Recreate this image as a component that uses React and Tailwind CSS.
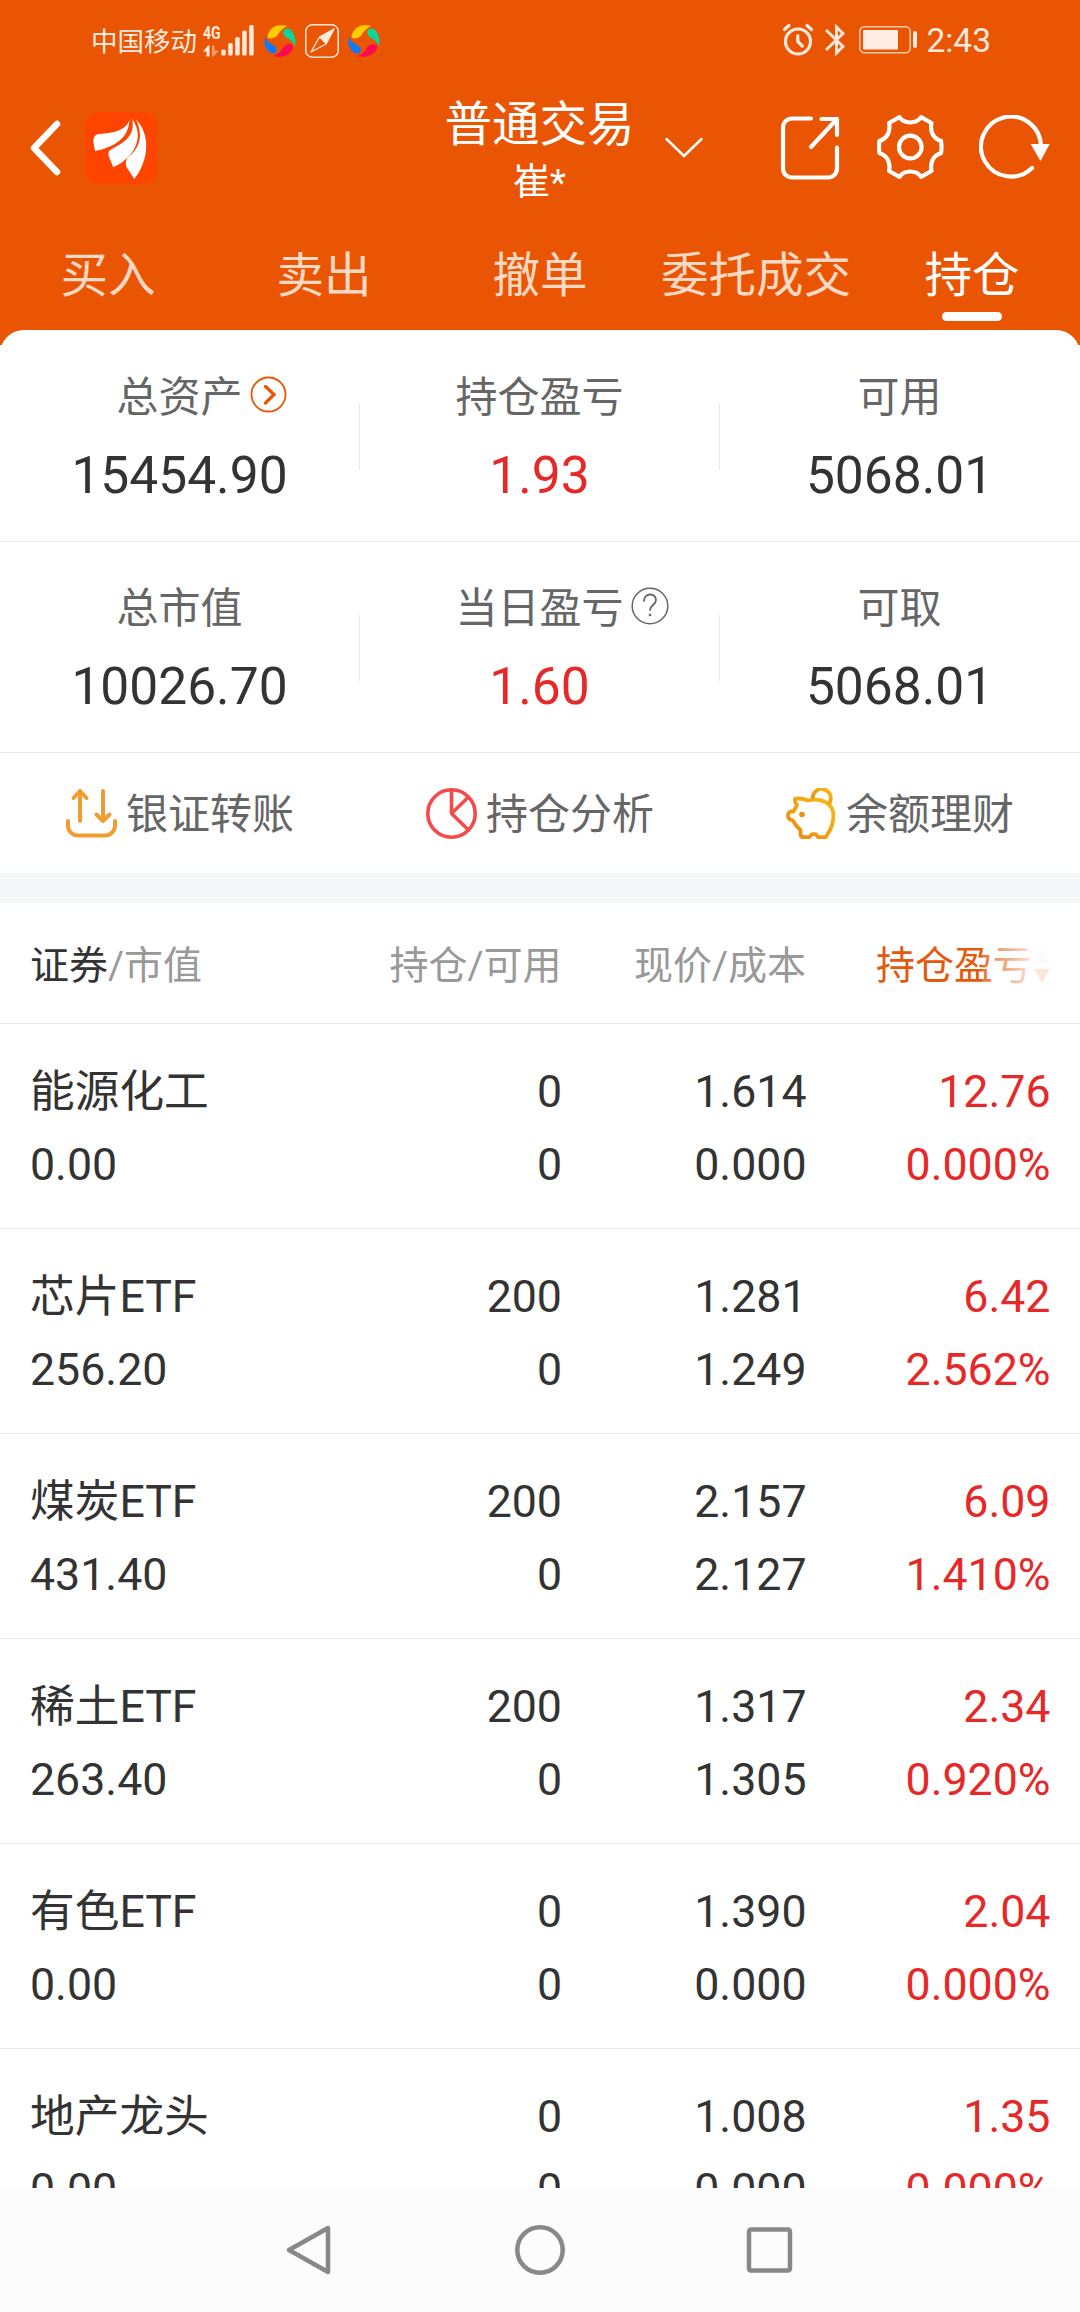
// Holdings page of the brokerage app (普通交易 / 持仓)

const TABS = ['买入', '卖出', '撤单', '委托成交', '持仓'];

const SUMMARY = [
    [
        { label: '总资产', value: '15454.90', icon: 'more' },
        { label: '持仓盈亏', value: '1.93', up: true },
        { label: '可用', value: '5068.01' },
    ],
    [
        { label: '总市值', value: '10026.70' },
        { label: '当日盈亏', value: '1.60', up: true, icon: 'help' },
        { label: '可取', value: '5068.01' },
    ],
];

const HOLDINGS = [
    { name: '能源化工', amount: '0.00', held: '0', usable: '0', price: '1.614', cost: '0.000', profit: '12.76', rate: '0.000%' },
    { name: '芯片ETF', amount: '256.20', held: '200', usable: '0', price: '1.281', cost: '1.249', profit: '6.42', rate: '2.562%' },
    { name: '煤炭ETF', amount: '431.40', held: '200', usable: '0', price: '2.157', cost: '2.127', profit: '6.09', rate: '1.410%' },
    { name: '稀土ETF', amount: '263.40', held: '200', usable: '0', price: '1.317', cost: '1.305', profit: '2.34', rate: '0.920%' },
    { name: '有色ETF', amount: '0.00', held: '0', usable: '0', price: '1.390', cost: '0.000', profit: '2.04', rate: '0.000%' },
    { name: '地产龙头', amount: '0.00', held: '0', usable: '0', price: '1.008', cost: '0.000', profit: '1.35', rate: '0.000%' },
];

/* ---------- Icons ---------- */

function SwirlIcon() {
    return (
        <svg className="h-8 w-8" viewBox="0 0 32 32">
            <path d="M3.5 12.5C4 6 9 .5 16 .3c3-.1 6 .2 7 .9-4 1.800-7 4.800-9.500 8.800-2.500 3.500-7.500 4.500-10 2.500z" fill="#ffcc00" />
            <path d="M19.5 5.500C21 3 25 2.500 28 6c3.500 5 4 10 3 16-1.500-5-4.500-7-8.500-9.500-3-2-4-4.500-3-7z" fill="#0ad69a" />
            <path d="M29 22.500c0 3.500-5 8.500-12 9.300-3 .2-5.500-.1-7.500-.8 4.500-1.500 7-4 9.500-8 2-3.500 6-5 8.500-3.500 1.500.8 1.800 1.500 1.500 3z" fill="#ff0a50" />
            <path d="M1.200 11.500C2.500 16 5 18 9 20c3.500 2 4.500 5 3 7.500-2 2.500-6.500.5-9-3C0 20 0 16 1.200 11.500z" fill="#0a7bff" />
        </svg>
    );
}

function CompassIcon() {
    return (
        <svg className="h-[34px] w-[34px]" viewBox="0 0 34 34" fill="none" stroke="#ffe9dc">
            <rect x="0.8" y="0.8" width="32.4" height="32.4" rx="6.5" strokeWidth="1.5" />
            <path d="M29 5 14.500 13 6 28l15-8z" strokeWidth="1.300" strokeLinejoin="round" />
            <path d="M29 5 14.500 13 21 20z" fill="#ffe9dc" />
        </svg>
    );
}

function SignalIcon() {
    return (
        <svg className="h-3 w-4" viewBox="0 0 16 12">
            <path d="M0 6.500 5 0.500h1.500V11.500h-3V6.500z" fill="#ffe9dc" />
            <path d="M9 0.500h2.500v5H16L10.500 11.500H9z" fill="#f7996a" />
        </svg>
    );
}

function BarsIcon() {
    return (
        <svg className="h-[31px] w-[33px]" viewBox="0 0 33 31" fill="#ffe9dc">
            <rect x="0.200" y="24.500" width="4.500" height="6" rx="1.500" />
            <rect x="7.200" y="18" width="4.500" height="12.500" rx="1.500" />
            <rect x="14.200" y="12" width="4.500" height="18.500" rx="1.500" />
            <rect x="21.200" y="5.500" width="4.500" height="25" rx="1.500" />
            <rect x="28.200" y="0" width="4.500" height="30.500" rx="1.500" />
        </svg>
    );
}

function AlarmIcon() {
    return (
        <svg className="h-[34px] w-[34px]" viewBox="0 0 34 34" fill="none" stroke="#ffe9dc" strokeWidth="3.2" strokeLinecap="round">
            <circle cx="17" cy="18.500" r="12.500" />
            <path d="M16.800 12.500v6l4.500 4.500M3.500 6.500l4.500-4M26 2.500l4.500 4" />
        </svg>
    );
}

function BluetoothIcon() {
    return (
        <svg className="h-8 w-5" viewBox="0 0 20 32" fill="none" stroke="#ffe9dc" strokeWidth="2.900">
            <path d="M1 6l17 16.500-6.500 6.500V3l6.500 6.500L1 26" />
        </svg>
    );
}

function BatteryIcon() {
    return (
        <svg className="h-7 w-[59px]" viewBox="0 0 59 28">
            <rect x="0.800" y="0.800" width="50.400" height="26" rx="4.500" fill="none" stroke="#ffc9ab" strokeWidth="1.500" />
            <rect x="4" y="4" width="35" height="19.500" rx="1" fill="#ffede3" />
            <rect x="54" y="5" width="4" height="17" rx="2" fill="#ffe9dc" />
        </svg>
    );
}

function BrandLogo() {
    return (
        <svg className="h-[72px] w-[72px]" viewBox="0 0 72 72">
            <rect width="72" height="72" rx="14" fill="#ff4400" />
            <g fill="#fff">
                <path d="M44.300 8C42 17 30 21.500 14 22c-4 .5-5.500 3-5.700 7.700L10 39c18-3.500 34-12 34.300-31z" />
                <path d="M47.300 7C50 24 40 30 26 37.500c-3 2-3 4-2 7.500l4.300 10.300C47 47 61 27 47.300 7z" />
                <path d="M51 7.300C60 27 52 38 43.500 45c-3 3-3 5.500-2 10l7.800 12C60 54 69 27 51 7.300z" />
            </g>
        </svg>
    );
}

function ShareIcon() {
    return (
        <svg className="h-[66px] w-[62px]" viewBox="0 0 62 66" fill="none" stroke="#fff" strokeWidth="4.200" strokeLinecap="round" strokeLinejoin="round">
            <path d="M31 3.500H12a9 9 0 0 0-9 9v41a9 9 0 0 0 9 9h36a9 9 0 0 0 9-9V32.500" />
            <path d="M41.500 4H57v16M57 4 31 32" />
        </svg>
    );
}

function GearIcon() {
    return (
        <svg className="h-[66px] w-[68px]" viewBox="0 0 68 66" fill="none" stroke="#fff" strokeWidth="4.200" strokeLinejoin="round">
            <path d="M22.500 2.200C25 6 29 7.500 33.300 7.500S41.500 6 44 2.200L54.500 8C52.500 17 57 24 64 25.800Q65 32 64 38.200C57 40 52.500 47 54.500 56L44 61.800C41.500 58 37.600 56.500 33.300 56.500S25 58 22.500 61.800L12 56C14 47 9.500 40 2.500 38.200Q1.500 32 2.500 25.800C9.500 24 14 17 12 8Z" />
            <circle cx="33.300" cy="32" r="11.300" />
        </svg>
    );
}

function RefreshIcon() {
    return (
        <svg className="h-[66px] w-[74px]" viewBox="0 0 74 66">
            <path d="M53 53A30 30 0 1 1 62 32" fill="none" stroke="#fff" strokeWidth="4.200" strokeLinecap="round" />
            <path d="M51.700 29h19L61.500 46z" fill="#fff" />
        </svg>
    );
}

function TransferIcon() {
    return (
        <svg className="h-[51px] w-[51px]" viewBox="0 0 51 51" fill="none" stroke="#f09c30" strokeWidth="4" strokeLinecap="round" strokeLinejoin="round">
            <path d="M2 33v4.500A10 10 0 0 0 12 47.500h27a10 10 0 0 0 10-10V33" />
            <path d="M14 33V3M7.500 10 14 3l6.500 7M37 3v30M30.500 26.500 37 33l6.500-6.500" />
        </svg>
    );
}

function PieIcon() {
    return (
        <svg className="h-[51px] w-[51px]" viewBox="0 0 51 51" fill="none" stroke="#f54a4a" strokeWidth="3.600" strokeLinejoin="round">
            <circle cx="25.500" cy="25.500" r="23.700" />
            <path d="M25.500 2v23.500L42 9.500M25.500 25.500 42.500 42" />
        </svg>
    );
}

function PiggyIcon() {
    return (
        <svg className="h-[51px] w-[51px]" viewBox="0 0 51 51" fill="none" strokeWidth="3.800" strokeLinejoin="round">
            <defs>
                <linearGradient id="piggy" x1="0" y1="1" x2="1" y2="0">
                    <stop offset="0" stopColor="#ec8a10" />
                    <stop offset="0.600" stopColor="#f3a512" />
                    <stop offset="1" stopColor="#f6be1c" />
                </linearGradient>
            </defs>
            <g stroke="url(#piggy)">
                <path d="M22 12.500c-4-1.700-8.500-2.500-13-1.700-.5 2.500.3 4.500 2 6.200L7.500 23.500H5c-2 .5-3 1.500-3 3.500 0 3 .5 4.500 5 5.500 2 4.500 4.500 7 7.500 9.500V47c.5 2 2 2.200 4 2.200h4.500c1.500-.5 2-3 3.500-3h3c1.500 0 1.500 3 3 3h6.500c1.500-.4 2-1.500 2.500-3 3.500-5 5.800-11 5.800-17.700C48.300 16 36 9.500 22 12.500z" />
                <path d="M26.800 11A9 9 0 1 1 44 13.500L43.500 16" />
            </g>
            <circle cx="16" cy="26.500" r="2.800" fill="#ee9010" />
        </svg>
    );
}

function MoreIcon() {
    return (
        <svg className="h-[37px] w-[37px]" viewBox="0 0 37 37" fill="none" stroke="#e8560a" strokeLinecap="round">
            <circle cx="18.500" cy="18.500" r="17" strokeWidth="1.800" />
            <path d="M15.500 10.500 24 18.500l-8.500 8.500" strokeWidth="3.300" />
        </svg>
    );
}

function HelpIcon() {
    return (
        <svg className="h-[38px] w-[38px]" viewBox="0 0 38 38" fill="none" stroke="#666" strokeLinecap="round">
            <circle cx="19" cy="19" r="17.800" strokeWidth="1.500" />
            <path d="M13 14c0-8.500 12-8.500 12-1 0 5-6 5-6 10" strokeWidth="1.800" />
            <circle cx="19" cy="28" r="1.300" fill="#666" stroke="none" />
        </svg>
    );
}

/* ---------- Sections ---------- */

function StatusBar() {
    return (
        <div className="flex h-20 items-center justify-between pr-[89px] pl-[91px] text-[#ffe9dc]">
            <div className="flex items-center">
                <span className="mt-[3px] w-[106px] text-[26.500px] leading-8 whitespace-nowrap">中国移动</span>
                <div className="mt-0.5 ml-1.5 flex h-[31px] w-[18px] flex-col justify-between">
                    <span className="h-4 origin-left scale-x-[0.780] text-[18px] leading-[14px] font-bold">4G</span>
                    <SignalIcon />
                </div>
                <BarsIcon />
                <div className="ml-[10px] flex items-center gap-[9px] pt-0.5">
                    <SwirlIcon />
                    <CompassIcon />
                    <SwirlIcon />
                </div>
            </div>
            <div className="flex items-center">
                <AlarmIcon />
                <span className="ml-[10px]"><BluetoothIcon /></span>
                <span className="ml-[14px]"><BatteryIcon /></span>
                <span className="mt-0.5 ml-[8px] text-[33.500px] leading-10">2:43</span>
            </div>
        </div>
    );
}

function TitleBar() {
    return (
        <div className="grid h-[136px] grid-cols-[1fr_190px_1fr] items-center text-white">
            <div className="flex items-center pl-[30px]">
                <svg className="h-[56px] w-8" viewBox="0 0 32 56" fill="none" stroke="#fff" strokeWidth="6.500" strokeLinecap="round" strokeLinejoin="round">
                    <path d="M27 4 4 28l23 24" />
                </svg>
                <span className="ml-[23px]"><BrandLogo /></span>
            </div>
            <div className="flex flex-col items-center pt-[8px] whitespace-nowrap">
                <h1 className="-ml-px text-[47.500px] leading-[62px]">普通交易</h1>
                <span className="-ml-px text-[37px] leading-[54px]">崔*</span>
            </div>
            <div className="flex items-center pl-[29px]">
                <svg className="h-6 w-10" viewBox="0 0 40 24" fill="none" stroke="#fff" strokeWidth="2.500" strokeLinecap="round">
                    <path d="M2.500 3 20 20 37.500 3" />
                </svg>
                <span className="ml-[76px]"><ShareIcon /></span>
                <span className="ml-[35px]"><GearIcon /></span>
                <span className="ml-[34px]"><RefreshIcon /></span>
            </div>
        </div>
    );
}

function Tabs() {
    return (
        <nav className="grid h-[114px] grid-cols-5 pt-[25px] text-center text-[47.500px] leading-[70px]">
            {TABS.map((tab) =>
                tab === '持仓' ? (
                    <div key={tab} className="flex flex-col items-center text-white">
                        <span>{tab}</span>
                        <span className="mt-px h-[9px] w-[60px] rounded-full bg-white" />
                    </div>
                ) : (
                    <div key={tab} className="whitespace-nowrap text-[#ffd9c4]">{tab}</div>
                )
            )}
        </nav>
    );
}

function SummaryCell({ item }) {
    return (
        <div className="flex flex-col items-center pr-px">
            <div className="relative text-[42px] leading-[60px] text-[#666]">
                {item.label}
                {item.icon && (
                    <span className="absolute top-[8px] left-full ml-[7px]">
                        {item.icon === 'more' ? <MoreIcon /> : <HelpIcon />}
                    </span>
                )}
            </div>
            <div className={item.up ? 'mt-[17px] text-[51.500px] leading-[62px] text-[#e62828]' : 'mt-[17px] text-[51.500px] leading-[62px] text-[#333]'}>
                {item.value}
            </div>
        </div>
    );
}

function SummaryRow({ items }) {
    return (
        <div className="flex h-[211px] shrink-0 border-b border-[#e9e9e9] pt-[37px]">
            {items.map((item, i) => (
                <div key={item.label} className="flex w-[360px]">
                    <div className="flex-1"><SummaryCell item={item} /></div>
                    {i < 2 && <div className="mt-9 -ml-px h-[66px] w-px bg-[#e8e8e8]" />}
                </div>
            ))}
        </div>
    );
}

function Action({ icon, text }) {
    return (
        <div className="flex items-center justify-center gap-[9px] text-[42px] text-[#666]">
            {icon}
            <span className="mt-1 leading-[60px]">{text}</span>
        </div>
    );
}

function TableHeader() {
    return (
        <div className="relative grid h-[121px] shrink-0 grid-cols-[317px_244.500px_244.500px_244px] items-center border-b border-[#e9e9e9] pt-1.5 text-right text-[39px] text-[#999]">
            <div className="pl-[30px] text-left"><span className="text-[#333]">证券</span>/市值</div>
            <div>持仓/可用</div>
            <div>现价/成本</div>
            <div className="flex items-center justify-end text-[#e35a0e]">
                <span>持仓盈亏</span>
                <svg className="ml-0.5 h-9 w-4" viewBox="0 0 16 36">
                    <path d="M8 1l8 14H0z" fill="#ddd" />
                    <path d="M8 35l8-14H0z" fill="#e8560a" />
                </svg>
            </div>
            {/* Edge fade over the last column */}
            <div className="absolute top-0 right-[30px] h-[110px] w-[68px] bg-linear-to-r from-white/15 to-white/85 to-75%" />
        </div>
    );
}

function HoldingRow({ row }) {
    return (
        <div className="grid h-[205px] shrink-0 grid-cols-[317px_245px_244.500px_244px] grid-rows-[73px_73px] border-b border-[#e9e9e9] pt-8 text-right text-[44.700px] leading-[73px] text-[#333]">
            <div className="pl-[30px] text-left">{row.name}</div>
            <div>{row.held}</div>
            <div>{row.price}</div>
            <div className="text-[#e62828]">{row.profit}</div>
            <div className="pl-[30px] text-left">{row.amount}</div>
            <div>{row.usable}</div>
            <div>{row.cost}</div>
            <div className="text-[#e62828]">{row.rate}</div>
        </div>
    );
}

function NavBar() {
    return (
        <div className="flex h-[124px] shrink-0 items-center justify-center gap-[179px] bg-[#fcfcfc]">
            <svg className="h-[52px] w-[52px]" viewBox="0 0 52 52" fill="none" stroke="#888" strokeWidth="4.500" strokeLinejoin="round">
                <path d="M45 4v44L6 26z" />
            </svg>
            <svg className="h-[52px] w-[52px]" viewBox="0 0 52 52" fill="none" stroke="#888" strokeWidth="4.500">
                <circle cx="26" cy="26" r="22.700" />
            </svg>
            <svg className="h-[52px] w-[52px]" viewBox="0 0 52 52" fill="none" stroke="#888" strokeWidth="4.500">
                <rect x="4" y="5.500" width="41" height="41" rx="2" />
            </svg>
        </div>
    );
}

function App() {
    return (
        <div className="flex h-[2312px] w-[1080px] flex-col overflow-hidden bg-white font-[Roboto,'Noto_Sans_CJK_SC',sans-serif]">
            <div className="h-[345px] shrink-0 overflow-hidden bg-[#ea5504]">
                <StatusBar />
                <TitleBar />
                <Tabs />
                <div className="h-6 rounded-t-[24px] bg-white" />
            </div>

            <main className="-mt-[15px] flex min-h-0 flex-1 flex-col overflow-hidden pt-px">
                {SUMMARY.map((items) => (
                    <SummaryRow key={items[0].label} items={items} />
                ))}

                <div className="grid h-[120px] shrink-0 grid-cols-3 items-center">
                    <Action icon={<TransferIcon />} text="银证转账" />
                    <Action icon={<PieIcon />} text="持仓分析" />
                    <Action icon={<PiggyIcon />} text="余额理财" />
                </div>
                <div className="h-[30px] shrink-0 bg-[#f5f7f9]" />

                <TableHeader />
                {HOLDINGS.map((row) => (
                    <HoldingRow key={row.name} row={row} />
                ))}
            </main>

            <NavBar />
        </div>
    );
}

export default App;
